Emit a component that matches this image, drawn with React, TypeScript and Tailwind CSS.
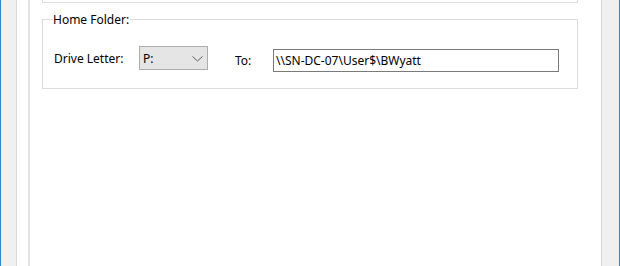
export default function App() {
  const font = { fontFamily: '"Noto Sans", "Liberation Sans", sans-serif' };
  return (
    <div
      className="w-[620px] h-[266px] flex bg-[#f0f0f0] border-x border-[#2b88d8] text-[12px] text-black overflow-hidden"
      style={font}
    >
      <div className="w-[15px] shrink-0" />
      <div className="flex-1 flex bg-white border-x border-[#d9d9d9]">
        <div className="w-[11px] shrink-0" />
        <div className="flex-1 border-l-2 border-[#e3e3e3] pl-[12px]">
          <div className="w-[536px] h-[3px] border-x border-b border-[#dcdcdc]" />
          <fieldset className="mt-[9px] w-[536px] h-[77px] border border-[#dcdcdc] px-0 pb-0">
            <legend className="ml-[9px] px-[1px] leading-[15px]">Home Folder:</legend>
            <div className="flex items-start pl-[11px]">
              <div className="mt-[19px] flex items-center h-[24px]">
                <span className="w-[85px] leading-[15px]">Drive Letter:</span>
                <div className="w-[69px] h-[24px] flex items-center justify-between bg-[#e5e5e5] border border-[#adadad] pl-[3px] pr-[4px]">
                  <span className="leading-[15px]">P:</span>
                  <svg width="11" height="6" viewBox="0 0 11 6" className="mt-[1px]">
                    <path d="M0.5 0.5 L5.5 5 L10.5 0.5" fill="none" stroke="#606060" strokeWidth="1" />
                  </svg>
                </div>
              </div>
              <div className="mt-[22px] ml-[27px] flex items-center h-[23px]">
                <span className="w-[38px] leading-[15px]">To:</span>
                <div className="w-[286px] h-[23px] flex items-center border border-[#7a7a7a] pl-[2px]">
                  <span className="leading-[15px]">{"\\\\SN-DC-07\\User$\\BWyatt"}</span>
                </div>
              </div>
            </div>
          </fieldset>
        </div>
      </div>
      <div className="w-[17px] shrink-0" />
    </div>
  );
}
